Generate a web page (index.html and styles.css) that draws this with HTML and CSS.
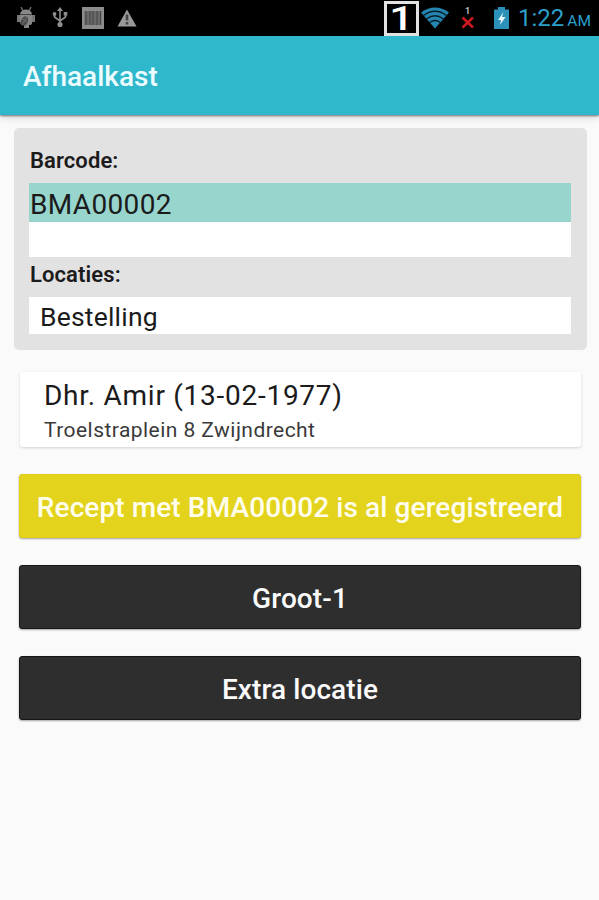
FILE: index.html
```html
<!DOCTYPE html>
<html lang="nl">
<head>
    <meta charset="UTF-8">
    <meta name="viewport" content="width=device-width, initial-scale=1.0">
    <title>Afhaalkast</title>
    <link rel="stylesheet" href="styles.css">
</head>
<body>
    <div class="status-bar">
        <div class="status-left">
            <svg class="icon-debug" width="20" height="22" viewBox="0 0 20 22">
                <path d="M5 0l2 4M15 0l-2 4" stroke="#777" stroke-width="1.3"/>
                <path d="M4 7.500a6 5 0 0 1 12 0z" fill="#888"/>
                <path d="M1 8h3v7H1zM16 8h3v7h-3z" fill="#777"/>
                <path d="M4 8h12v8q0 2-3 2v3H8v-3q-4 0-4-3z" fill="#858585"/>
                <ellipse cx="8.500" cy="14" rx="3.300" ry="5" fill="#4a4a4a" transform="rotate(25 8.500 14)"/>
                <path d="M6 18l5-8M6 12l5 3" stroke="#777" stroke-width="0.8"/>
            </svg>
            <svg class="icon-usb" width="16" height="22" viewBox="0 0 16 22">
                <path d="M8 3v15M2.500 7v3l5.500 4 5.500-4V7" fill="none" stroke="#8e8e8e" stroke-width="1.600"/>
                <path d="M8 0l3 4H5z" fill="#8e8e8e"/>
                <circle cx="2.500" cy="7" r="1.900" fill="#8e8e8e"/>
                <path d="M11.700 5h3.600v3.600h-3.600z" fill="#8e8e8e"/>
                <circle cx="8" cy="17.500" r="2.600" fill="#8e8e8e"/>
            </svg>
            <svg class="icon-barcode" width="22" height="22" viewBox="0 0 22 22">
                <path d="M0 0h22v22H0z" fill="#8c8c8c"/>
                <path d="M2.500 4h17v14h-17z" fill="#696969"/>
                <path d="M4 4v14M8 4v14M11 4v14M15 4v14M18.500 4v14" stroke="#454545" stroke-width="1"/>
            </svg>
            <svg class="icon-warning" width="20" height="18" viewBox="0 0 20 18">
                <path d="M10 0.500L19.500 17.500H0.500z" fill="#999"/>
                <path d="M10 5.500v6M10 13v2.500" stroke="#444" stroke-width="2.600"/>
            </svg>
        </div>
        <div class="status-right">
            <div class="scanner-badge"><span>1</span></div>
            <svg class="icon-wifi" width="28" height="22" viewBox="0 0 28 22">
                <path d="M0 5.500Q14-4.500 28 5.500L14 21.500z" fill="#2587af"/>
                <path d="M2.500 8.500Q14 0 25.500 8.500M5.500 12Q14 5.500 22.500 12M8.700 15.500Q14 11.500 19.300 15.500" fill="none" stroke="#061f2b" stroke-width="1.500"/>
            </svg>
            <svg class="icon-signal" width="14" height="22" viewBox="0 0 14 22">
                <text x="4" y="6.500" class="sim">1</text>
                <path d="M1.500 10.500l10.500 10M12 10.500L1.500 20.500" stroke="#c9191d" stroke-width="2.600"/>
            </svg>
            <svg class="icon-battery" width="15" height="22" viewBox="0 0 15 22">
                <path d="M4 0h7v2.500h4V22H0V2.500h4z" fill="#2c91b9"/>
                <path d="M9.500 5L4 13h3l-1 5 5.500-8H8z" fill="#e8f7fc"/>
            </svg>
            <span class="clock">1:22</span>
            <span class="ampm">AM</span>
        </div>
    </div>

    <header class="toolbar">
        <h1>Afhaalkast</h1>
    </header>

    <main>
        <section class="scan-panel">
            <div class="label">Barcode:</div>
            <div class="barcode-list">
                <div class="barcode active">BMA00002</div>
            </div>
            <div class="label label-locations">Locaties:</div>
            <div class="location">Bestelling</div>
        </section>

        <section class="patient-card">
            <div class="patient-name">Dhr. Amir (13-02-1977)</div>
            <div class="patient-address">Troelstraplein 8 Zwijndrecht</div>
        </section>

        <div class="btn notice">Recept met BMA00002 is al geregistreerd</div>
        <button type="button" class="btn">Groot-1</button>
        <button type="button" class="btn">Extra locatie</button>
    </main>
</body>
</html>
```
FILE: styles.css
```css
:root {
    --primary: #2fb8cc;
    --highlight: #98d5cd;
    --warning: #e3d31d;
    --dark: #2e2e2e;
    --panel: #e2e2e2;
    --bg: #fafafa;
}
* {
    box-sizing: border-box;
}
body {
    margin: 0;
    min-height: 100vh;
    background: var(--bg);
    color: #1b1b1b;
    font-family: Roboto, sans-serif;
}
.status-bar {
    display: flex;
    justify-content: space-between;
    height: 36px;
    background: #000;
}
.status-left, .status-right {
    display: flex;
    align-items: center;
}
.status-left {
    padding-left: 16px;
}
.icon-usb {
    margin-left: 16px;
}
.icon-barcode {
    margin-left: 14px;
}
.icon-warning {
    margin-left: 13px;
}
.status-right {
    padding-right: 8px;
    color: #2c9fcd;
}
.scanner-badge {
    width: 35px;
    height: 35px;
    border: 3px solid #e2e2e2;
    color: #fff;
    font: 500 33px/30px Roboto, sans-serif;
    text-align: center;
}
.scanner-badge span {
    display: block;
    transform: scaleX(1.3);
}
.icon-wifi {
    margin-left: 2px;
}
.icon-signal {
    margin-left: 12px;
}
.sim {
    fill: #bbb;
    font: bold 9px Roboto, sans-serif;
}
.icon-battery {
    margin-left: 19px;
}
.clock {
    margin-left: 9px;
    font-size: 24px;
    line-height: 38px;
}
.ampm {
    margin: 6px 0 0 3px;
    font-size: 15.5px;
}
.toolbar {
    height: 79px;
    padding: 0 23px;
    background: var(--primary);
    box-shadow: 0 1px 2px rgba(0, 0, 0, 0.5), 0 3px 8px rgba(0, 0, 0, 0.12);
}
h1 {
    margin: 0;
    color: #ecfcff;
    font-size: 28px;
    font-weight: 500;
    line-height: 81px;
}
main {
    padding: 13px 18px 0 19px;
}
.scan-panel {
    height: 222px;
    margin: 0 -6px 0 -5px;
    padding: 9px 16px 0 15px;
    background: var(--panel);
    border-radius: 5px;
}
.label {
    height: 46px;
    padding-left: 1px;
    font-size: 22px;
    font-weight: 600;
    letter-spacing: 0.1px;
    line-height: 47px;
}
.label-locations {
    height: 40px;
    line-height: 35px;
}
.barcode-list {
    height: 74px;
    background: #fff;
}
.barcode {
    height: 39px;
    padding-left: 1px;
    font-size: 28px;
    letter-spacing: 0.35px;
    line-height: 43px;
}
.barcode.active {
    background: var(--highlight);
}
.location {
    height: 37px;
    padding-left: 11px;
    background: #fff;
    font-size: 26.5px;
    letter-spacing: 0.2px;
    line-height: 39px;
}
.patient-card {
    height: 75px;
    margin: 22px 0 27px 1px;
    padding: 5px 24px;
    background: #fff;
    border-radius: 3px;
    box-shadow: 0 1px 3px rgba(0, 0, 0, 0.16);
}
.patient-name {
    font-size: 28px;
    letter-spacing: 0.73px;
    line-height: 38px;
}
.patient-address {
    color: #3a3a3a;
    font-size: 21px;
    letter-spacing: 0.45px;
    line-height: 31px;
}
.btn {
    display: block;
    width: 100%;
    height: 64px;
    margin: 0 0 27px;
    padding: 1px 0 0;
    border: 1px solid #161616;
    border-radius: 3px;
    background: var(--dark);
    box-shadow: 0 1px 2px rgba(0, 0, 0, 0.35);
    color: #fafafa;
    font: 500 28px/63px Roboto, sans-serif;
    letter-spacing: 0.1px;
    text-align: center;
    white-space: nowrap;
}
.notice {
    border-color: #e2cf10;
    background: var(--warning);
    color: #fffdec;
}
```
